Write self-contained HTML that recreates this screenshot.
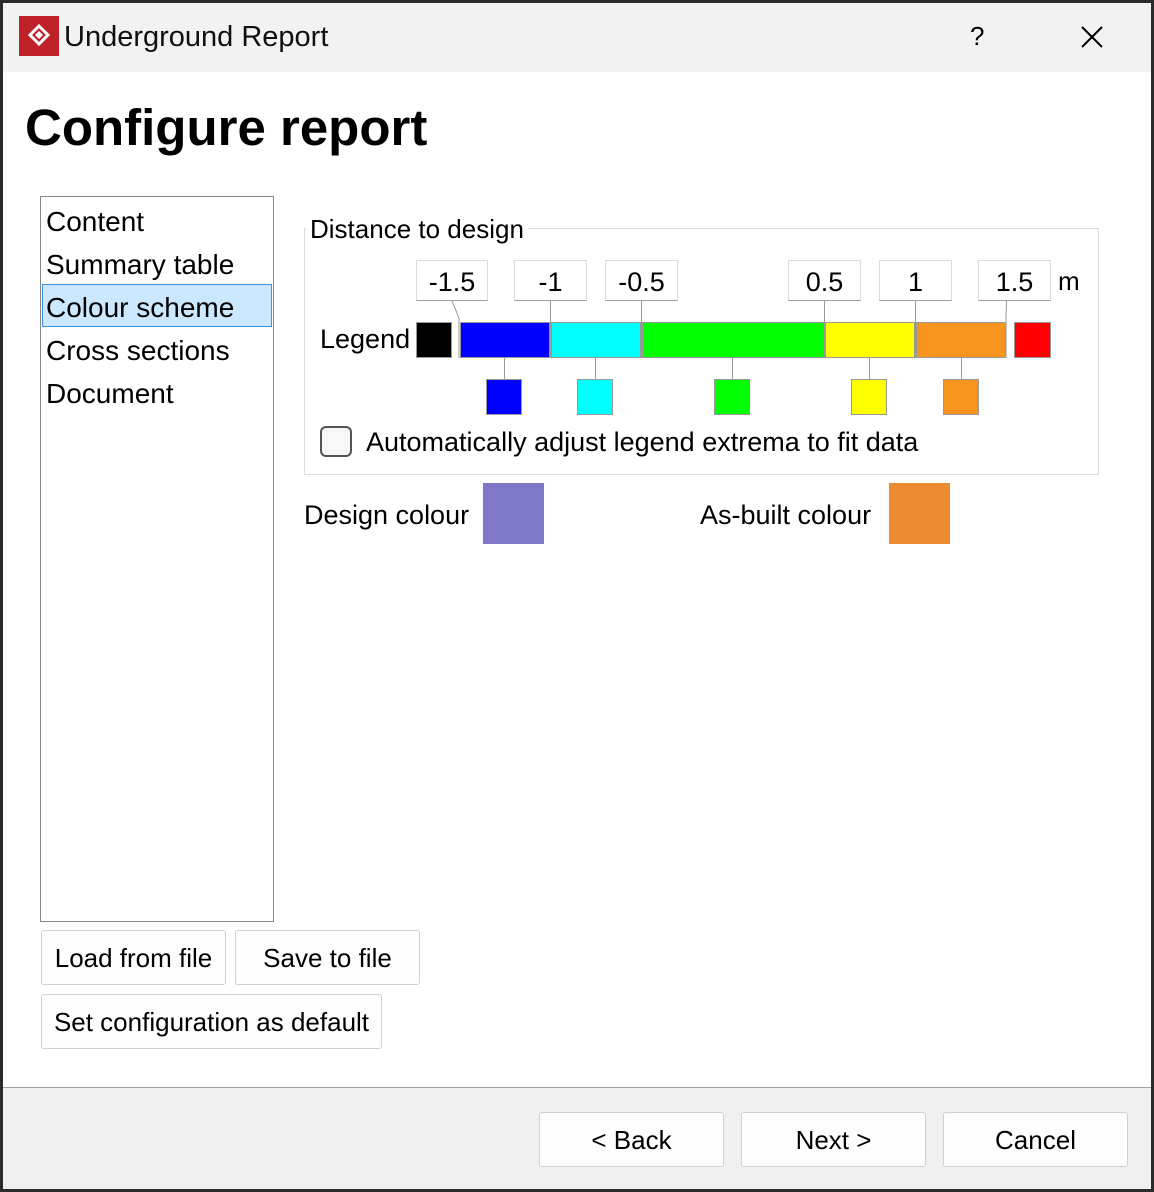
<!DOCTYPE html>
<html><head><meta charset="utf-8"><style>
*{margin:0;padding:0;box-sizing:border-box}
body{width:1154px;height:1192px;background:#2b2b2b;font-family:"Liberation Sans",sans-serif;position:relative;overflow:hidden;color:#000}
.a{position:absolute}
.win{left:3px;top:3px;width:1148px;height:1186px;background:#fff}
.t{white-space:nowrap}
.lbl{position:absolute;top:260px;height:41px;background:#fff;border:1px solid #dcdcdc;border-bottom:1px solid #a0a0a0;font-size:27px;text-align:center;line-height:42px}
.bar{position:absolute;top:322px;height:36px;border:1px solid #999}
.sq{position:absolute;top:379px;width:36px;height:36px;border:1px solid #999}
.btn{position:absolute;background:#fdfdfd;border:1px solid #d0d0d0;border-radius:3px;font-size:26px;text-align:center}
.li{position:absolute;left:46px;font-size:28px}
</style></head><body>
<div class="a win"></div>
<div class="a" style="left:3px;top:3px;width:1148px;height:69px;background:#f2f2f2"></div>
<div class="a" style="left:19px;top:16px;width:40px;height:40px;background:#be2128">
<svg width="40" height="40" viewBox="0 0 40 40"><path d="M20 10 L29 19 L20 28 L11 19Z" fill="none" stroke="#fff" stroke-width="3"/><path d="M16 19 L20 15 L24 19 L20 23Z" fill="#fff"/></svg></div>
<div class="a t" style="left:64px;top:21px;font-size:29px;color:#111">Underground Report</div>
<div class="a t" style="left:970px;top:21px;font-size:26px">?</div>
<svg class="a" style="left:1081px;top:26px" width="22" height="22"><path d="M1 1L21 21M21 1L1 21" stroke="#000" stroke-width="2"/></svg>
<div class="a t" style="left:25px;top:98px;font-size:51px;font-weight:bold">Configure report</div>

<div class="a" style="left:40px;top:196px;width:234px;height:726px;border:1px solid #888;background:#fff"></div>
<div class="a" style="left:42px;top:284px;width:230px;height:43px;background:#cce8ff;border:1px solid #3d92e0"></div>
<div class="li t" style="top:206px">Content</div>
<div class="li t" style="top:249px">Summary table</div>
<div class="li t" style="top:292px">Colour scheme</div>
<div class="li t" style="top:335px">Cross sections</div>
<div class="li t" style="top:378px">Document</div>

<div class="btn" style="left:41px;top:930px;width:185px;height:55px;line-height:55px">Load from file</div>
<div class="btn" style="left:235px;top:930px;width:185px;height:55px;line-height:55px">Save to file</div>
<div class="btn" style="left:41px;top:994px;width:341px;height:55px;line-height:55px">Set configuration as default</div>

<div class="a" style="left:304px;top:228px;width:795px;height:247px;border:1px solid #dcdcdc"></div>
<div class="a t" style="left:306px;top:214px;font-size:26px;background:#fff;padding:0 4px">Distance to design</div>

<div class="lbl" style="left:416px;width:72px">-1.5</div>
<div class="lbl" style="left:514px;width:73px">-1</div>
<div class="lbl" style="left:605px;width:73px">-0.5</div>
<div class="lbl" style="left:788px;width:73px">0.5</div>
<div class="lbl" style="left:879px;width:73px">1</div>
<div class="lbl" style="left:978px;width:73px">1.5</div>
<div class="a t" style="left:1058px;top:266px;font-size:26px">m</div>
<div class="a t" style="left:320px;top:324px;font-size:27px">Legend</div>

<svg class="a" style="left:0;top:0" width="1154" height="420"><g stroke="#999" stroke-width="1" fill="none">
<path d="M452 301 L459 318 L459 358"/><path d="M550.5 301V358M641.5 301V358M824.5 301V358M915.5 301V358M1006.5 301 L1006 318 L1006 358"/>
<path d="M504.5 358V379M595.5 358V379M732.5 358V379M869.5 358V379M961.5 358V379"/></g></svg>

<div class="bar" style="left:416px;width:36px;background:#000"></div>
<div class="bar" style="left:460px;width:90px;background:#0000ff"></div>
<div class="bar" style="left:551px;width:90px;background:#00ffff"></div>
<div class="bar" style="left:642px;width:182px;background:#00ff00"></div>
<div class="bar" style="left:825px;width:90px;background:#ffff00"></div>
<div class="bar" style="left:916px;width:90px;background:#f7941d"></div>
<div class="bar" style="left:1014px;width:37px;background:#ff0000"></div>
<div class="sq" style="left:486px;background:#0000ff"></div>
<div class="sq" style="left:577px;background:#00ffff"></div>
<div class="sq" style="left:714px;background:#00ff00"></div>
<div class="sq" style="left:851px;background:#ffff00"></div>
<div class="sq" style="left:943px;background:#f7941d"></div>

<div class="a" style="left:320px;top:426px;width:32px;height:31px;border:2px solid #555;border-radius:6px;background:#f8f8f8"></div>
<div class="a t" style="left:366px;top:427px;font-size:27px">Automatically adjust legend extrema to fit data</div>

<div class="a t" style="left:304px;top:500px;font-size:27px">Design colour</div>
<div class="a" style="left:483px;top:483px;width:61px;height:61px;background:#7f78c8"></div>
<div class="a t" style="left:700px;top:500px;font-size:27px">As-built colour</div>
<div class="a" style="left:889px;top:483px;width:61px;height:61px;background:#ee8a32"></div>

<div class="a" style="left:3px;top:1087px;width:1148px;height:102px;background:#f0f0f0;border-top:1px solid #a0a0a0"></div>
<div class="btn" style="left:539px;top:1112px;width:185px;height:55px;line-height:55px">&lt; Back</div>
<div class="btn" style="left:741px;top:1112px;width:185px;height:55px;line-height:55px">Next &gt;</div>
<div class="btn" style="left:943px;top:1112px;width:185px;height:55px;line-height:55px">Cancel</div>
</body></html>
